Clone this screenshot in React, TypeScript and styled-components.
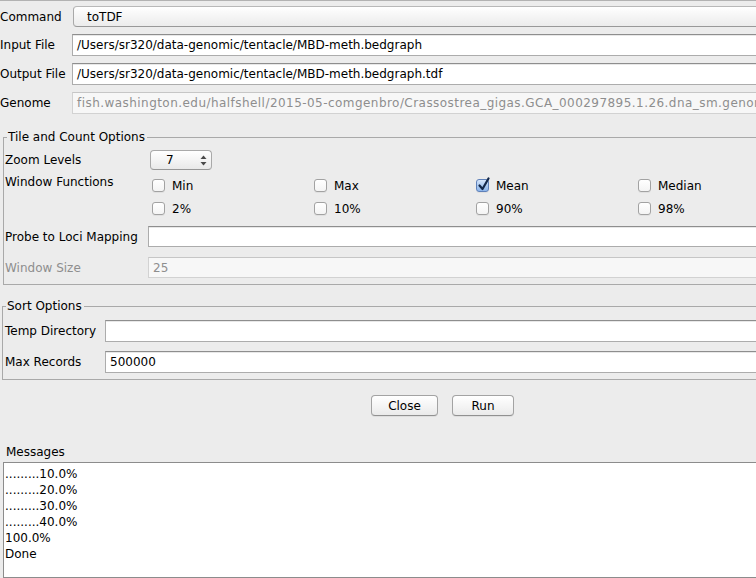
import React from "react";
import styled, { createGlobalStyle } from "styled-components";

const GlobalStyle = createGlobalStyle`
  html, body { margin: 0; padding: 0; background: #ececec; overflow: hidden; }
  body { font-family: "DejaVu Sans", "Liberation Sans", sans-serif; font-size: 12px; color: #000; }
  #root { width: 756px; height: 578px; overflow: hidden; }
`;

const Page = styled.div`
  width: 885px;
  height: 578px;
  border-top: 1px solid #b2b2b2;
  box-sizing: border-box;
  display: flex;
  flex-direction: column;
`;

const TopSection = styled.div`
  display: flex;
  flex-direction: column;
  gap: 7px;
  padding-top: 5px;
`;

const Row = styled.div<{ $h?: number; $mt?: number }>`
  display: flex;
  align-items: center;
  height: ${(p) => p.$h ?? 22}px;
  margin-top: ${(p) => p.$mt ?? 0}px;
`;

const Label = styled.div<{ $w: number; $disabled?: boolean; $pl?: number }>`
  width: ${(p) => p.$w}px;
  flex: none;
  padding-left: ${(p) => p.$pl ?? 0}px;
  box-sizing: border-box;
  white-space: nowrap;
  color: ${(p) => (p.$disabled ? "#8e8e8e" : "#000")};
  line-height: 16px;
`;

const Field = styled.div<{ $disabled?: boolean; $spread?: boolean }>`
  flex: 1;
  align-self: stretch;
  display: flex;
  align-items: center;
  padding-left: 4px;
  background: ${(p) => (p.$disabled ? "#f7f7f7" : "#fff")};
  border: 1px solid ${(p) => (p.$disabled ? "#d2d2d2" : "#acacac")};
  border-top-color: ${(p) => (p.$disabled ? "#c6c6c6" : "#8e8e8e")};
  color: ${(p) => (p.$disabled ? "#8e8e8e" : "#000")};
  letter-spacing: ${(p) => (p.$spread ? "0.45px" : "normal")};
  white-space: nowrap;
  overflow: hidden;
  box-shadow: ${(p) => (p.$disabled ? "none" : "inset 0 1px 0 #e8e8e8")};
`;

const Combo = styled.div`
  flex: 1;
  align-self: stretch;
  display: flex;
  align-items: center;
  margin-left: 1px;
  padding-left: 13px;
  border: 1px solid #a9a9a9;
  border-top-color: #b8b8b8;
  border-bottom-color: #999;
  border-radius: 4px;
  background: linear-gradient(#ffffff, #f3f3f3 60%, #ececec);
`;

const Group = styled.fieldset<{ $ml: number; $mt: number; $pt: number; $pb: number }>`
  margin: ${(p) => p.$mt}px 0 0 ${(p) => p.$ml}px;
  padding: ${(p) => p.$pt}px 0 ${(p) => p.$pb}px 0;
  border: 1px solid #a9a9a9;
  min-inline-size: 0;
  display: flex;
  flex-direction: column;
`;

const Legend = styled.legend`
  padding: 0 2px 0 1px;
  margin-left: 3px;
  line-height: 16px;
  font-size: 12px;
`;

const Spinner = styled.div`
  width: 62px;
  height: 20px;
  box-sizing: border-box;
  margin-left: 1px;
  border: 1px solid #a9a9a9;
  border-bottom-color: #979797;
  border-radius: 4px;
  background: linear-gradient(#ffffff, #f2f2f2 60%, #e9e9e9);
  display: flex;
  align-items: center;
  justify-content: space-between;
  padding: 0 4px 0 15px;
`;

const FnBlock = styled.div`
  display: flex;
  margin-top: 4px;
`;

const FnGrid = styled.div`
  display: grid;
  grid-template-columns: repeat(4, 162px);
  grid-auto-rows: 23px;
  margin-left: 3px;
`;

const CheckItem = styled.label`
  display: flex;
  align-items: center;
  gap: 7px;
`;

const Box = styled.span<{ $checked?: boolean }>`
  position: relative;
  width: 13px;
  height: 13px;
  box-sizing: border-box;
  border-radius: 3px;
  border: 1px solid ${(p) => (p.$checked ? "#5f81b9" : "#a2a2a2")};
  background: ${(p) =>
    p.$checked
      ? "linear-gradient(#d6e6fb, #a9c8f0 55%, #8db6ec)"
      : "linear-gradient(#ffffff, #f4f4f4)"};
  box-shadow: 0 1px 0 rgba(0,0,0,0.05);
  flex: none;
`;

const Tick = styled.svg`
  position: absolute;
  left: 0px;
  top: -3px;
`;

const Buttons = styled.div`
  display: flex;
  justify-content: center;
  gap: 14px;
  margin-top: 15px;
`;

const Button = styled.button<{ $w: number }>`
  width: ${(p) => p.$w}px;
  height: 21px;
  padding: 0;
  font-family: inherit;
  font-size: 12px;
  color: #000;
  border: 1px solid #a3a3a3;
  border-bottom-color: #919191;
  border-radius: 4px;
  background: linear-gradient(#ffffff, #f4f4f4 55%, #eaeaea);
  box-shadow: 0 1px 0 rgba(0,0,0,0.06);
`;

const MsgLabel = styled.div`
  margin-top: 28px;
  padding-left: 6px;
  line-height: 16px;
`;

const MsgArea = styled.div`
  margin: 2px 0 0 3px;
  flex: 1;
  background: #fff;
  border: 1px solid #8c8c8c;
  padding: 3px 0 0 1px;
  line-height: 16px;
`;

const ArrowBox = styled.svg`
  display: block;
`;

function Check({ label, checked }: { label: string; checked?: boolean }) {
  return (
    <CheckItem>
      <Box $checked={checked}>
        {checked && (
          <Tick width="14" height="15" viewBox="0 0 14 15">
            <path d="M2.5 8.5 L5.5 12 L11.5 1.5" fill="none" stroke="#13284a" strokeWidth="2.2" strokeLinecap="round" strokeLinejoin="round" />
          </Tick>
        )}
      </Box>
      <span>{label}</span>
    </CheckItem>
  );
}

export default function App() {
  const messages = [".........10.0%", ".........20.0%", ".........30.0%", ".........40.0%", "100.0%", "Done"];
  return (
    <>
      <GlobalStyle />
      <Page>
        <TopSection>
          <Row $h={21}>
            <Label $w={72}>Command</Label>
            <Combo>toTDF</Combo>
          </Row>
          <Row>
            <Label $w={72}>Input File</Label>
            <Field>/Users/sr320/data-genomic/tentacle/MBD-meth.bedgraph</Field>
          </Row>
          <Row>
            <Label $w={72}>Output File</Label>
            <Field>/Users/sr320/data-genomic/tentacle/MBD-meth.bedgraph.tdf</Field>
          </Row>
          <Row>
            <Label $w={72}>Genome</Label>
            <Field $disabled $spread>fish.washington.edu/halfshell/2015-05-comgenbro/Crassostrea_gigas.GCA_000297895.1.26.dna_sm.genome</Field>
          </Row>
        </TopSection>

        <Group $ml={3} $mt={15} $pt={5} $pb={6}>
          <Legend>Tile and Count Options</Legend>
          <Row $h={20}>
            <Label $w={145} $pl={1}>Zoom Levels</Label>
            <Spinner>
              <span>7</span>
              <ArrowBox width="7" height="11" viewBox="0 0 7 11">
                <path d="M3.5 0.5 L6.5 4 L0.5 4 Z" fill="#4a4a4a" />
                <path d="M3.5 10.5 L6.5 7 L0.5 7 Z" fill="#4a4a4a" />
              </ArrowBox>
            </Spinner>
          </Row>
          <FnBlock>
            <Label $w={145} $pl={1}>Window Functions</Label>
            <FnGrid>
              <Check label="Min" />
              <Check label="Max" />
              <Check label="Mean" checked />
              <Check label="Median" />
              <Check label="2%" />
              <Check label="10%" />
              <Check label="90%" />
              <Check label="98%" />
            </FnGrid>
          </FnBlock>
          <Row $h={21} $mt={6}>
            <Label $w={144} $pl={1}>Probe to Loci Mapping</Label>
            <Field />
          </Row>
          <Row $h={21} $mt={10}>
            <Label $w={144} $pl={1} $disabled>Window Size</Label>
            <Field $disabled>25</Field>
          </Row>
        </Group>

        <Group $ml={2} $mt={13} $pt={6} $pb={6}>
          <Legend>Sort Options</Legend>
          <Row $h={22}>
            <Label $w={102} $pl={2}>Temp Directory</Label>
            <Field />
          </Row>
          <Row $h={22} $mt={9}>
            <Label $w={102} $pl={2}>Max Records</Label>
            <Field>500000</Field>
          </Row>
        </Group>

        <Buttons>
          <Button $w={67}>Close</Button>
          <Button $w={62}>Run</Button>
        </Buttons>

        <MsgLabel>Messages</MsgLabel>
        <MsgArea>
          {messages.map((m, i) => (
            <div key={i}>{m}</div>
          ))}
        </MsgArea>
      </Page>
    </>
  );
}
